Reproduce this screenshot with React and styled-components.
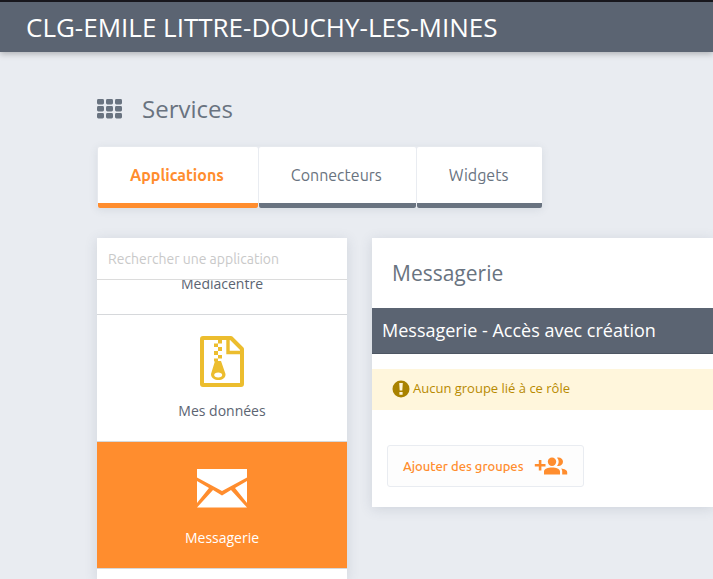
import React, { useLayoutEffect, useRef, useState } from "react";
import styled, { createGlobalStyle } from "styled-components";

const slate = "#5b6472";
const grey = "#697380";
const orange = "#ff8d2e";
const uiFont = `Ubuntu, "Noto Sans", sans-serif`;

const GlobalStyle = createGlobalStyle`
  *, *::before, *::after { box-sizing: border-box; }
  body {
    margin: 0;
    background: #e9ecf1;
    color: ${grey};
    font-family: "Open Sans", sans-serif;
    overflow: hidden;
  }
  button, input { font: inherit; }
`;

const Page = styled.div`
  min-height: 100vh;
`;

const Header = styled.header`
  display: flex;
  align-items: center;
  height: 52px;
  padding: 0 26px;
  border-top: 2px solid #18171d;
  background: ${slate};
  box-shadow: 0 2px 6px rgba(0, 0, 0, 0.25);
`;

const School = styled.h1`
  margin: 0;
  color: #fff;
  font-size: 26px;
  font-weight: 400;
  line-height: 36px;
  white-space: nowrap;
`;

const Content = styled.main`
  padding: 40px 0 0 97px;
`;

const PageTitle = styled.h2`
  display: flex;
  align-items: center;
  gap: 20px;
  margin: 0;
  font-size: 24px;
  font-weight: 400;
  line-height: 34px;
`;

const Tabs = styled.nav`
  display: flex;
  gap: 1px;
  width: max-content;
  margin-top: 20px;
  border: 1px solid #e6e9ee;
  border-width: 1px 0 0 1px;
  border-radius: 3px;
  box-shadow: 0 2px 8px rgba(60, 75, 100, 0.1);
`;

const Tab = styled.button`
  height: 61px;
  padding: 0 34px 0 32px;
  border: 0;
  border-bottom: 5px solid ${(p) => (p.$active ? orange : grey)};
  border-radius: 2px;
  background: #fff;
  color: ${(p) => (p.$active ? orange : grey)};
  font-family: ${uiFont};
  font-size: 16px;
  font-weight: ${(p) => (p.$active ? 700 : 400)};
  cursor: pointer;
`;

const Columns = styled.div`
  display: flex;
  align-items: flex-start;
  gap: 25px;
  margin-top: 30px;
`;

const Card = styled.section`
  background: #fff;
  box-shadow: 0 2px 12px rgba(60, 75, 100, 0.15);
`;

const Sidebar = styled(Card)`
  flex: 0 0 250px;
`;

const Search = styled.input`
  display: block;
  width: 100%;
  height: 42px;
  padding: 0 11px;
  border: 0;
  border-bottom: 1px solid #dcdcdc;
  background: transparent;
  color: ${slate};
  font-family: ${uiFont};
  font-size: 14px;
  outline: 0;
  &::placeholder { color: #c9c9c9; opacity: 1; }
`;

const AppList = styled.div`
  height: calc(100vh - 280px);
  padding-bottom: 127px;
  overflow-y: auto;
  scrollbar-width: none;
`;

const AppItem = styled.button`
  display: flex;
  flex-direction: column;
  align-items: center;
  gap: 14px;
  width: 100%;
  height: 127px;
  padding: 20px 10px;
  border: 0;
  border-bottom: 1px solid #d6d8db;
  background: ${(p) => (p.$active ? orange : "#fff")};
  color: ${(p) => (p.$active ? "#fff" : slate)};
  font-size: 14px;
  line-height: 20px;
  cursor: pointer;
`;

const IconSlot = styled.span`
  display: flex;
  align-items: center;
  height: 52px;
`;

const Details = styled(Card)`
  flex: 1;
  min-width: 0;
  padding-bottom: 20px;
`;

const DetailsTitle = styled.h3`
  margin: 0;
  padding: 20px;
  font-size: 21px;
  font-weight: 400;
  line-height: 30px;
`;

const RoleBar = styled.h4`
  margin: 0;
  padding: 0 10px;
  border-bottom: 1px solid #4d5663;
  background: ${slate};
  color: #fff;
  font-size: 18px;
  font-weight: 400;
  line-height: 45px;
  white-space: nowrap;
`;

const Notice = styled.p`
  display: flex;
  align-items: flex-start;
  gap: 3px;
  height: 41px;
  margin: 15px 0 35px;
  padding: 11px 20px;
  background: #fff6dc;
  color: #b88a00;
  font-size: 13px;
  line-height: 16px;
  white-space: nowrap;
`;

const AddButton = styled.button`
  display: flex;
  align-items: center;
  gap: 10px;
  height: 42px;
  margin-left: 15px;
  padding: 0 15px;
  border: 1px solid #e9ecf1;
  border-radius: 3px;
  background: #fdfdfd;
  color: ${orange};
  font-family: ${uiFont};
  font-size: 13px;
  font-weight: 500;
  white-space: nowrap;
  cursor: pointer;
`;

const GridIcon = () => (
  <svg width="25" height="20" viewBox="0 0 25 20" fill={grey} aria-hidden="true">
    {[0, 7, 14].map((y) =>
      [0, 9, 18].map((x) => (
        <rect key={`${x}-${y}`} x={x} y={y} width="7" height="5.4" rx="1.4" />
      ))
    )}
  </svg>
);

const ZipIcon = () => (
  <svg width="44" height="51" viewBox="0 0 44 51" fill="none" aria-hidden="true">
    <path d="M3 2H31L42 13V48Q42 49 41 49H3Q2 49 2 48V3Q2 2 3 2Z" stroke="#ecbd2e" strokeWidth="4" strokeLinejoin="round" />
    <path d="M28 3V16.5H42" stroke="#ecbd2e" strokeWidth="3.4" />
    <path d="M18 4h4v3.5h-4zM14 7.5h4v3.5h-4zM18 11h4v4h-4zM14 15h4v4h-4zM18 19h4v3.5h-4zM14 22.5h4v3h-4z" fill="#ecbd2e" />
    <path fillRule="evenodd" d="M15 25H21L25.500 38C26 46 11 46 11 38ZM18.200 36.500c-2.500 0-4 1.100-4 2.500s1.500 2.500 4 2.500 4-1.100 4-2.500-1.500-2.500-4-2.500Z" fill="#ecbd2e" />
  </svg>
);

const MailIcon = () => (
  <svg width="52" height="39" viewBox="0 0 52 39" fill="#fff" aria-hidden="true">
    <path d="M1 0H51V8.500L26 22L1 8.500ZM1 12L13 19L1 34ZM51 12V34L39 19ZM17 21L26 26.500L35 21L51 38.500H1Z" />
  </svg>
);

const AlertIcon = () => (
  <svg width="18" height="18" viewBox="0 0 18 18" aria-hidden="true">
    <circle cx="9" cy="9" r="8.500" fill="#a98200" />
    <path d="M7.200 3H10.800L10.300 10.500H7.700ZM7.400 12h3.200v2.800H7.400Z" fill="#fff6dc" />
  </svg>
);

const AddGroupIcon = () => (
  <svg width="34" height="18" viewBox="0 0 34 18" fill={orange} aria-hidden="true">
    <path d="M4.800 3h2.600v4H11.500v2.600H7.400v4H4.800v-4H.8V7h4z" />
    <circle cx="18" cy="4.700" r="4.200" />
    <path d="M10 17.500V14.500C10 11.800 14 10.500 18 10.500s8 1.300 8 4v3zM23 .7c3-.9 6 1.100 6 4s-3 4.900-6 4c2.200-2.200 2.200-5.800 0-8ZM27 11.500c3.500.5 6.200 1.600 6.200 3.800v2.200H28.200v-3c0-1.300-.4-2.200-1.200-3Z" />
  </svg>
);

const apps = [
  { name: "Médiacentre" },
  { name: "Mes données", Icon: ZipIcon },
  { name: "Messagerie", Icon: MailIcon },
];
const tabs = ["Applications", "Connecteurs", "Widgets"];

export default function App() {
  const list = useRef(null);
  const [tab, setTab] = useState("Applications");
  const [app, setApp] = useState("Messagerie");

  useLayoutEffect(() => {
    list.current.scrollTop = 92;
  }, []);

  return (
    <Page>
      <GlobalStyle />
      <Header>
        <School>CLG-EMILE LITTRE-DOUCHY-LES-MINES</School>
      </Header>
      <Content>
        <PageTitle>
          <GridIcon />
          Services
        </PageTitle>
        <Tabs>
          {tabs.map((name) => (
            <Tab key={name} $active={name === tab} onClick={() => setTab(name)}>
              {name}
            </Tab>
          ))}
        </Tabs>
        <Columns>
          <Sidebar>
            <Search type="text" aria-label="Rechercher une application" placeholder="Rechercher une application" />
            <AppList ref={list}>
              {apps.map(({ name, Icon }) => (
                <AppItem key={name} $active={name === app} onClick={() => setApp(name)}>
                  <IconSlot>{Icon && <Icon />}</IconSlot>
                  {name}
                </AppItem>
              ))}
            </AppList>
          </Sidebar>
          <Details>
            <DetailsTitle>Messagerie</DetailsTitle>
            <RoleBar>Messagerie - Accès avec création</RoleBar>
            <Notice>
              <AlertIcon />
              Aucun groupe lié à ce rôle
            </Notice>
            <AddButton>
              Ajouter des groupes
              <AddGroupIcon />
            </AddButton>
          </Details>
        </Columns>
      </Content>
    </Page>
  );
}
